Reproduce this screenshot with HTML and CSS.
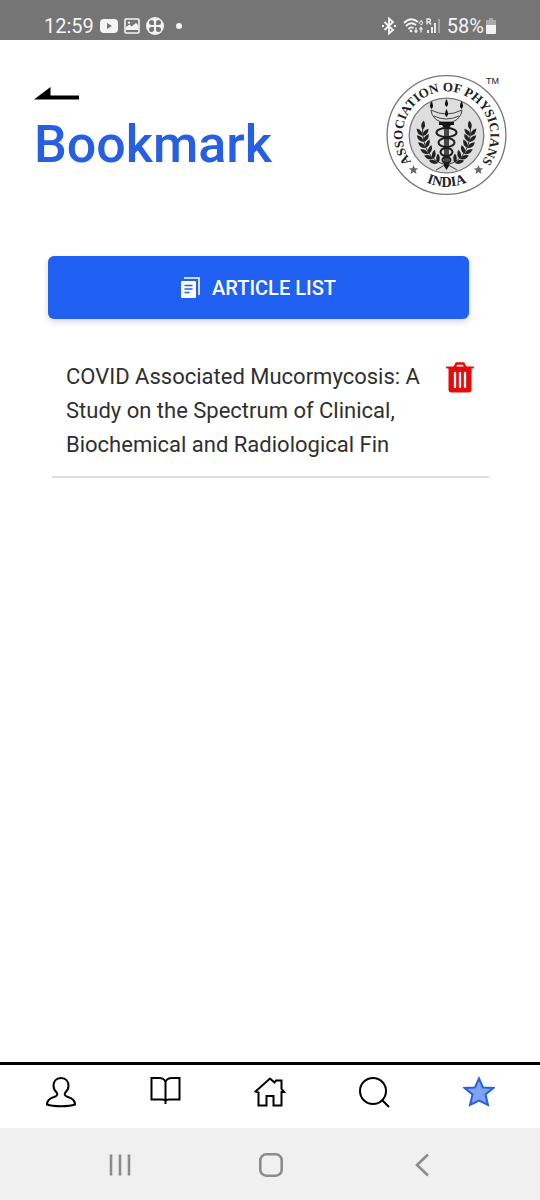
FILE: index.html
```html
<!DOCTYPE html>
<html lang="en">
<head>
<meta charset="utf-8">
<meta name="viewport" content="width=device-width, initial-scale=1">
<title>Bookmark</title>
<link rel="stylesheet" href="styles.css">
</head>
<body>
<div class="status-bar">
  <div class="status-left">
    <span>12:59</span>
    <svg width="18" height="14" viewBox="0 0 18 14"><rect width="18" height="14" rx="4" fill="#f4f4f4"/><path d="M7 4l5 3-5 3z" fill="#757575"/></svg>
    <svg width="16" height="16" viewBox="0 0 16 16"><rect x="1" y="1" width="14" height="14" rx="1" fill="none" stroke="#f4f4f4" stroke-width="1.6"/><path d="M2 12V9l3.500-2.500 2 2L12 5l2 2v5z" fill="#f4f4f4"/><circle cx="5" cy="4.600" r="1.200" fill="#f4f4f4"/></svg>
    <svg width="18" height="18" viewBox="0 0 18 18"><circle cx="9" cy="9" r="9" fill="#f4f4f4"/><g fill="#757575"><path d="M8 8H5.500A2.500 2.500 0 1 1 8 5.500z"/><path d="M10 8h2.500A2.500 2.500 0 1 0 10 5.500z"/><path d="M8 10H5.500A2.500 2.500 0 1 0 8 12.500z"/><path d="M10 10h2.500A2.500 2.500 0 1 1 10 12.500z"/></g></svg>
    <span class="more-dot"></span>
  </div>
  <div class="status-right">
    <svg width="16" height="18" viewBox="0 0 16 18" fill="none" stroke="#f4f4f4" stroke-width="1.900"><path d="M3.500 5l8.500 8-4 3.500v-15L12 5l-8.500 8"/><path d="M1 9h2M13 9h2"/></svg>
    <svg width="38" height="18" viewBox="0 0 38 18" fill="none" stroke="#f4f4f4"><path d="M1 6Q8-1 15 5M3 9q5-5 10-1M5.500 12Q8 9.500 10.500 11" stroke-width="1.800"/><circle cx="8" cy="14" r="1.300" fill="#f4f4f4" stroke="none"/><path d="M13 10.500v5m-1.500-2l1.500 2 1.500-2M18 15.500v-5m-1.500 2l1.500-2 1.500 2" stroke-width="1.200"/><path d="M18.500 3l-1.500 2a1.500 1.500 0 1 0 1-.5" stroke-width="1"/><path d="M24 7.500V2h2a1.500 1.500 0 0 1 0 3h-2m2 0l2 2.500" stroke-width="1.300"/><path d="M25 13v3M29 10v6M32 6v10" stroke-width="1.800"/><path d="M36 2v14" stroke="#aaa" stroke-width="1.800"/></svg>
    <span>58%</span>
    <svg class="battery" width="10" height="16" viewBox="0 0 10 16"><path d="M0 2h3V0h4v2h3v5H0z" fill="#aaa"/><path d="M0 7h10v8q0 1-1 1H1q-1 0-1-1z" fill="#f4f4f4"/></svg>
  </div>
</div>

<header class="page-header">
  <div class="heading">
    <button class="back" type="button" aria-label="Back"><svg width="45" height="13" viewBox="0 0 45 13"><path d="M0 12.500L16.500 0v8.500H45v4z"/></svg></button>
    <h1>Bookmark</h1>
  </div>
  <svg class="logo" width="121" height="121" viewBox="0 0 121 121" role="img" aria-label="Association of Physicians India">
    <defs>
      <path id="arc-top" d="M60.500 104.500A44 44 0 1 1 60.600 104.500"/>
      <path id="arc-bottom" d="M9.500 60.500A51 51 0 0 0 111.500 60.500"/>
      <path id="leaf" d="M0 0Q-3.800-4.500 0-9.500Q3.800-4.500 0 0z"/>
      <g id="branch" fill="#222">
        <path d="M60 90Q36 83 36.500 52" fill="none" stroke="#333"/>
        <use href="#leaf" transform="translate(36.500 55) rotate(8)"/>
        <use href="#leaf" transform="translate(36.500 61) rotate(-38)"/>
        <use href="#leaf" transform="translate(36.500 61) rotate(40)"/>
        <use href="#leaf" transform="translate(37.500 67) rotate(-45)"/>
        <use href="#leaf" transform="translate(37.500 67) rotate(34)"/>
        <use href="#leaf" transform="translate(39.500 73) rotate(-52)"/>
        <use href="#leaf" transform="translate(39.500 73) rotate(26)"/>
        <use href="#leaf" transform="translate(42.500 79) rotate(-60)"/>
        <use href="#leaf" transform="translate(42.500 79) rotate(18)"/>
        <use href="#leaf" transform="translate(47 84) rotate(-68)"/>
        <use href="#leaf" transform="translate(47 84) rotate(10)"/>
        <use href="#leaf" transform="translate(52 88) rotate(-76)"/>
        <use href="#leaf" transform="translate(52 88) rotate(0)"/>
      </g>
    </defs>
    <circle cx="60.500" cy="60" r="59.400" fill="#fff" stroke="#777" stroke-width="1.300"/>
    <circle cx="60.500" cy="60.500" r="37.300" fill="#dedede" stroke="#777" stroke-width="1.300"/>
    <text class="logo-name"><textPath href="#arc-top" startOffset="50%">ASSOCIATION OF PHYSICIANS</textPath></text>
    <text class="logo-country"><textPath href="#arc-bottom" startOffset="50%">INDIA</textPath></text>
    <g fill="#666"><path id="logo-star" d="M27.500 90l1.300 3.200 3.500.2-2.700 2.200.9 3.400-3-1.900-3 1.900.9-3.400-2.700-2.200 3.500-.2z"/><use href="#logo-star" x="65"/></g>
    <use href="#branch"/>
    <use href="#branch" transform="translate(121 0) scale(-1 1)"/>
    <g fill="none" stroke="#444" stroke-width="1">
      <path d="M45 35q1 9 10 12h11q9-3 10-12M45 35q15 8 31 0M48 41q12 6 25 0"/>
      <path d="M50 95l10.500-6 10.500 6"/>
    </g>
    <path d="M53 47h15v3h-3l-2 3v38l-2.500 4-2.500-4V53l-2-3h-3z" fill="#151515"/>
    <g fill="#dedede" fill-opacity=".25" stroke="#1c1c1c" stroke-width="2">
      <ellipse cx="60.500" cy="57.500" rx="10" ry="4.500"/>
      <ellipse cx="60.500" cy="67.500" rx="8" ry="4.500"/>
      <ellipse cx="60.500" cy="77" rx="6" ry="4"/>
      <ellipse cx="60.500" cy="85" rx="4" ry="3"/>
    </g>
    <g fill="#111"><path d="M45.500 34q-3-3 0-8q3 5 0 8zM60.500 32q-3-3 0-8q3 5 0 8zM75.500 34q-3-3 0-8q3 5 0 8zM60.500 42q-3-3 0-8q3 5 0 8z"/></g>
    <text class="logo-mark" x="100" y="9">TM</text>
  </svg>
</header>

<main class="content">
  <button class="list-button" type="button">
    <svg width="19" height="21" viewBox="0 0 19 21"><path d="M3 1h15v17" fill="none" stroke="#fff" stroke-width="1.600"/><rect y="4" width="15" height="17" rx="1" fill="#fff"/><path d="M3.500 8.500h8M3.500 12h8M3.500 15.500h5" stroke="#2060f2" stroke-width="1.400"/></svg>
    ARTICLE LIST
  </button>
  <ul class="articles">
    <li class="article">
      <a href="#">COVID Associated Mucormycosis: A Study on the Spectrum of Clinical, Biochemical and Radiological Fin</a>
      <button class="delete" type="button" aria-label="Delete bookmark"><svg width="28" height="31" viewBox="0 0 28 31"><path d="M8.500 5.500L10.500 1.500h7l2 4" fill="none" stroke="#e60b0b" stroke-width="2.400"/><path d="M1 5.500h26" stroke="#e60b0b" stroke-width="2" stroke-linecap="round"/><path d="M2.500 6h23V27.500q0 3-3 3h-17q-3 0-3-3z" fill="#e60b0b"/><path d="M9 11v14M14 11v14M19 11v14" stroke="#fff" stroke-width="2.300" stroke-linecap="round"/></svg></button>
    </li>
  </ul>
</main>

<nav class="tabs" aria-label="Main">
  <a href="#" aria-label="Profile"><svg width="32" height="32" viewBox="0 0 32 32"><path d="M16 2C11 2 8.500 5.500 8.500 10c0 3 1.500 5 3.500 7 1 2-.5 3-3 4-5 1.500-7 4-7 7.500 6 2.300 22 2.300 28 0C30 25 28 22.500 23 21c-2.500-1-4-2-3-4 2-2 3.500-4 3.500-7C23.500 5.500 21 2 16 2z"/></svg></a>
  <a href="#" aria-label="Journal"><svg width="32" height="32" viewBox="0 0 32 32"><path d="M15.500 6C14.500 3 12 2 9 2H1.500v21.500H12q3 0 3.500 1.500.5-1.500 3.500-1.500h10.500V2H22c-3 0-5.500 1-6.500 4zM15.500 6v22"/></svg></a>
  <a href="#" aria-label="Home"><svg width="32" height="32" viewBox="0 0 32 32"><path d="M1.500 15.500L16 2.500l4.500 4L22 4.500h5.500V13l2.500 3h-2.500v13.500h-8V20h-7v9.500h-8V16.500z"/></svg></a>
  <a href="#" aria-label="Search"><svg width="32" height="32" viewBox="0 0 32 32"><circle cx="15" cy="15" r="13"/><path d="M24 24l7 7"/></svg></a>
  <a href="#" class="active" aria-label="Bookmarks" aria-current="page"><svg width="32" height="32" viewBox="0 0 32 32"><path d="M16 2.500l4 9 10.500.5-8 6.500L25 29l-9-4.500L7 29l2.500-10.500-8-6.500 10.500-.5z"/></svg></a>
</nav>

<div class="system-nav">
  <button type="button" aria-label="Recent apps"><svg width="24" height="24" viewBox="0 0 24 24"><path d="M3 1.500v21M12 1.500v21M21 1.500v21" stroke-width="2.600"/></svg></button>
  <button type="button" aria-label="Home screen"><svg width="24" height="24" viewBox="0 0 24 24"><rect x="1.300" y="1.300" width="21.400" height="21.400" rx="6"/></svg></button>
  <button type="button" aria-label="System back"><svg width="24" height="24" viewBox="0 0 24 24"><path d="M18 1.500L7 12l11 10.500"/></svg></button>
</div>
</body>
</html>
```

FILE: styles.css
```css
* {
  box-sizing: border-box;
}

body {
  margin: 0;
  min-height: 100vh;
  display: flex;
  flex-direction: column;
  background: #fff;
  font-family: Roboto, sans-serif;
  color: #303030;
}

button {
  font: inherit;
  border: 0;
  padding: 0;
  background: none;
}

svg {
  display: block;
  flex: none;
}

.status-bar {
  height: 40px;
  padding: 12px 44px 0;
  display: flex;
  justify-content: space-between;
  background: #757575;
  color: #f4f4f4;
  font-size: 20px;
  line-height: 28px;
}

.status-left,
.status-right {
  display: flex;
  align-items: center;
  gap: 6px;
}

.status-right .battery {
  margin-left: -4px;
}

.more-dot {
  width: 6px;
  height: 6px;
  margin-left: 6px;
  border-radius: 50%;
  background: #f4f4f4;
}

.page-header {
  padding: 35px 33px 0 34px;
  display: flex;
  justify-content: space-between;
  align-items: flex-start;
}

.heading {
  padding-top: 12px;
}

.back {
  display: block;
}

h1 {
  margin: 13px 0 0;
  font-size: 52px;
  line-height: 64px;
  font-weight: 500;
  color: #265fe3;
}

.logo {
  overflow: visible;
}

.logo text {
  fill: #222;
}

.logo-name,
.logo-country {
  font-family: "Liberation Serif", serif;
  font-weight: 700;
  text-anchor: middle;
}

.logo-name {
  font-size: 13px;
}

.logo-country {
  font-size: 14px;
}

.logo-mark {
  font-family: "Liberation Sans", sans-serif;
  font-size: 9px;
}

.content {
  flex: 1;
  padding: 60px 51px 0 48px;
}

.list-button {
  width: calc(100% - 20px);
  height: 63px;
  display: flex;
  align-items: center;
  justify-content: center;
  gap: 12px;
  border-radius: 6px;
  background: #2060f2;
  box-shadow: 0 3px 6px #2020602e;
  color: #fff;
  font-size: 20px;
  font-weight: 500;
}

.articles {
  list-style: none;
  margin: 41px 0 0 4px;
  padding: 0;
}

.article {
  padding: 0 15px 14px 14px;
  display: flex;
  align-items: flex-start;
  gap: 12px;
  border-bottom: 2px solid #dcdcdc;
}

.article a {
  flex: 1;
  color: inherit;
  text-decoration: none;
  font-size: 22px;
  line-height: 34px;
}

.delete {
  margin-top: 2px;
}

.tabs {
  height: 66px;
  padding: 11px 9px 0;
  display: grid;
  grid-template-columns: repeat(5, 1fr);
  justify-items: center;
  align-items: start;
  border-top: 3px solid #000;
}

.tabs svg {
  fill: none;
  stroke: #000;
  stroke-width: 2;
}

.tabs .active svg {
  fill: #7da2f8;
  stroke: #2b60dc;
}

.system-nav {
  height: 72px;
  padding: 2px 43px 0 45px;
  display: grid;
  grid-template-columns: repeat(3, 1fr);
  place-items: center;
  background: #f0f0f0;
}

.system-nav svg {
  fill: none;
  stroke: #8c8c8c;
  stroke-width: 2.6;
}
```
